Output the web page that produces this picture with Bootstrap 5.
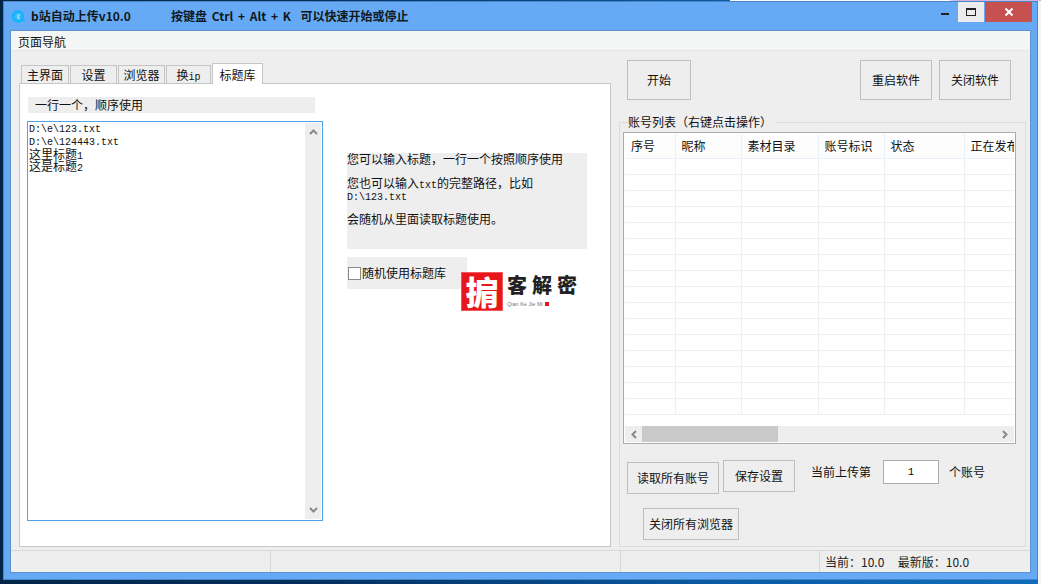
<!DOCTYPE html>
<html lang="zh">
<head>
<meta charset="utf-8">
<title>b站自动上传v10.0</title>
<link rel="stylesheet" href="https://cdn.jsdelivr.net/npm/bootstrap@5.3.0/dist/css/bootstrap.min.css">
<style>
html,body{margin:0;height:100%;overflow:hidden}
body{width:1041px;height:584px;position:relative;background:linear-gradient(90deg,#02264a 0,#032f5e 30%,#0a5ca6 70%,#0f6dbb 100%);font:12px/16px "Noto Sans CJK SC","Noto Sans CJK JP",sans-serif;color:#111;text-spacing-trim:space-all}
.behind{position:absolute;right:0;top:0;width:3px;height:100%;background:#f4f4f4}
.behindtop{position:absolute;left:730px;top:0;width:311px;height:1px;background:linear-gradient(90deg,#fff 0,#fff 70%,#cdb6e2 72%,#cdb6e2 100%)}
.win{position:absolute;left:3px;top:1px;width:1035px;height:579px;background:#66aaf5;border:1px solid #4a86c6;padding:0 6px 6px;display:flex;flex-direction:column}
.tbar{height:28px;display:flex;align-items:flex-start;flex:none;position:relative}
.appicon{margin:7px 0 0 1px;flex:none;display:block}
.t1{font:700 12px/16px "Noto Sans CJK SC",sans-serif;margin:6px 0 0 5px;color:#101820;width:140px}
.t2{font:700 12px/16px "Noto Sans CJK SC",sans-serif;color:#101820;margin-top:6px;word-spacing:2px}
.winbtns{margin-left:auto;display:flex;margin-right:-1px}
.wb{height:20px;display:flex;align-items:center;justify-content:center}
.wmin{width:26px}.wmin i{display:block;width:8px;height:2px;background:#222;margin-top:4px}
.wmax{width:26px;background:#ececec;margin-right:1px}.wmax i{display:block;width:10px;height:8px;border:1px solid #222;border-top-width:2px}
.wclose{width:47px;background:#c75050;color:#fff}
.client{flex:1;display:flex;flex-direction:column;background:#eee;border:1px solid #5b92cf;min-height:0}
.menubar{height:20px;background:#f4f6f5;border-bottom:1px solid #e6e6e6;padding:3px 7px 0;flex:none}
.bodyrow{flex:1;display:flex;min-height:0}
.leftcol{width:600px;flex:none;padding:12px 0 3px 8px;display:flex;flex-direction:column}
.tabs-x{border:0;gap:1px;flex-wrap:nowrap;padding-left:2px}
.tabs-x .nav-link{height:18px;margin:2px 0 0;padding:0;font-size:12px;line-height:17px;background:#eee;border:1px solid #c6c6c6;border-bottom:0;border-radius:0;color:#111;text-align:center}
.tabs-x .nav-link.active{height:21px;margin:0 0 -1px;padding-top:2px;background:#fff;border:1px solid #c6c6c6;border-bottom:0;position:relative;z-index:1;color:#111}
.mn{font-family:"Liberation Mono",monospace;font-size:10px}
.pane{flex:1;background:#fff;border:1px solid #c6c6c6;padding:13px 0 0 7px;display:flex;min-height:0}
.editcol{width:296px;flex:none}
.capt{margin-left:1px;width:287px;height:16px;background:#eee;padding-left:7px;line-height:16px}
.edit{margin-top:8px;height:400px;border:1px solid #4fa3e6;display:flex;padding-left:1px}
.edittext{flex:1;padding-top:1px;font:10px/13px "Liberation Mono","Noto Sans CJK SC",monospace;color:#111}
.edittext b{display:block;height:12px;font:400 12px/12px "Noto Sans CJK SC","Liberation Mono",sans-serif}
.edittext b:first-of-type{margin-top:-1px}
.vs{width:16px;margin:1px;background:#eee;display:flex;flex-direction:column;justify-content:space-between;align-items:center;padding:6px 0}
.infocol{margin-left:24px;width:240px;padding-top:56px;position:relative}
.info{width:240px;height:96px;background:#eee}
.info p{margin:0;line-height:12px;height:12px}
.info .gap1{margin-top:12px}
.info .gap2{margin-top:10px}
.info p.mono{font:10px/10px "Liberation Mono",monospace;height:10px;margin-top:4px}
.rnd{margin-top:8px;width:120px;height:32px;background:#eee;display:flex;align-items:center;gap:1px;padding:0 0 0 1px}
.rnd .form-check-input{width:13px;height:13px;margin:0;border-radius:0;border:1px solid #8a8a8a;flex:none}
.brand{position:absolute;left:114px;top:175px;display:flex;gap:4px}
.stamp{width:42px;height:39px;background:#e8161b;border:1px solid #f0585b;color:#fff;font:900 33px/37px "Noto Sans CJK SC",sans-serif;text-align:center}
.bname{font:900 20px/22px "Noto Sans CJK SC",sans-serif;color:#222;letter-spacing:5px;margin-top:2px;white-space:nowrap}
.bsub{font:5.500px/6px "Liberation Sans",sans-serif;color:#777;display:flex;align-items:center;gap:2px;margin-top:5px}
.bsub i{display:block;width:4px;height:4px;background:#e8161b}
.rightcol{flex:1;padding:9px 4px 3px 8px;display:flex;flex-direction:column;min-width:0}
.topbtns{display:flex;margin-left:8px;height:40px;flex:none}
.wbtn.btn{background:#eee;border:1px solid #bfbfbf;border-radius:0;color:#111;font-size:12px;line-height:16px;padding:0;--bs-btn-hover-bg:#eee}
.group{flex:1;border:1px solid #dcdcdc;margin-top:22px;position:relative;padding:9px 9px 0 3px;display:flex;flex-direction:column;min-height:0}
.grouplabel{position:absolute;left:8px;top:-9px;background:#eee;padding-right:4px;line-height:16px}
.lv{height:312px;border:1px solid #a9acb3;background:#fff;padding:1px;display:flex;flex-direction:column;flex:none;overflow:hidden}
.lv .table{table-layout:fixed;width:392px;margin:0;--bs-table-bg:transparent;border-collapse:collapse;font-size:12px}
.lv th{height:24px;padding:0 0 0 6px;vertical-align:middle;font-weight:400;line-height:18px;background:#fdfdfd;border:0;border-right:1px solid #e8f0fa;border-bottom:1px solid #e8f0fa;white-space:nowrap;overflow:hidden;color:#111}
.lv td{height:16px;padding:0;border:0;border-right:1px solid #efefef;border-bottom:1px solid #efefef}
.lv th:last-child,.lv td:last-child{border-right:0}
.lvbody{flex:1;overflow:hidden}
.hs{height:16px;background:#eee;display:flex;align-items:center;justify-content:space-between;position:relative;padding:0 6px;flex:none}
.thumb{position:absolute;left:17px;top:0;width:136px;height:100%;background:#c9c9c9}
.row1{display:flex;margin:16px 0 0 4px;align-items:flex-start;flex:none}
.upl{margin-left:16px;margin-top:4px}
.numb{width:56px;height:24px;margin:0 10px 0 12px;border:1px solid #abadb3;background:#fff;text-align:center;font:10px/22px "Liberation Mono",monospace;border-radius:0;padding:0}
.status{height:22px;flex:none;background:#eee;border-top:1px solid #d8d8d8;display:flex;align-items:stretch}
.sb1{width:260px;border-right:1px solid #d8d8d8}
.sb2{width:350px;border-right:1px solid #d8d8d8}
.sbgap{width:199px;border-right:1px solid #d8d8d8}
.sbtext{padding:3px 0 0 5px;white-space:pre;color:#222}
</style>
</head>
<body>
<div class="behind"></div>
<div class="behindtop"></div>
<div class="win">
  <div class="tbar">
    <svg class="appicon" width="15" height="15" viewBox="0 0 15 15"><circle cx="7" cy="7.500" r="5" fill="#39b6f5" stroke="#10b4ff" stroke-width="2.500"/><path d="M7 5v5M9 5 7 7.500 9 10" stroke="#a8e4ff" stroke-width="1" fill="none"/><path d="M11 11.500h3" stroke="#10b4ff" stroke-width="1.500"/></svg>
    <div class="t1">b站自动上传v10.0</div>
    <div class="t2">按键盘 Ctrl + Alt + K&nbsp; 可以快速开始或停止</div>
    <div class="winbtns">
      <div class="wb wmin"><i></i></div>
      <div class="wb wmax"><i></i></div>
      <div class="wb wclose"><svg width="10" height="10" viewBox="0 0 10 10"><path d="M1.500 1.500 8.500 8.500M8.500 1.500 1.500 8.500" stroke="#fff" stroke-width="2"/></svg></div>
    </div>
  </div>
  <div class="client">
    <div class="menubar">页面导航</div>
    <div class="bodyrow">
      <div class="leftcol">
        <ul class="nav nav-tabs tabs-x">
          <li class="nav-item"><a class="nav-link" style="width:48px">主界面</a></li>
          <li class="nav-item"><a class="nav-link" style="width:47px">设置</a></li>
          <li class="nav-item"><a class="nav-link" style="width:47px">浏览器</a></li>
          <li class="nav-item"><a class="nav-link" style="width:45px">换<span class="mn">ip</span></a></li>
          <li class="nav-item"><a class="nav-link active" style="width:51px">标题库</a></li>
        </ul>
        <div class="pane">
          <div class="editcol">
            <div class="capt">一行一个，顺序使用</div>
            <div class="edit">
              <div class="edittext">D:\e\123.txt<br>D:\e\124443.txt<b>这里标题<span class="mn">1</span></b><b>这是标题<span class="mn">2</span></b></div>
              <div class="vs">
                <svg width="9" height="6" viewBox="0 0 9 6"><path d="M1 5 4.500 1.500 8 5" fill="none" stroke="#888" stroke-width="2"/></svg>
                <svg width="9" height="6" viewBox="0 0 9 6"><path d="M1 1 4.500 4.500 8 1" fill="none" stroke="#888" stroke-width="2"/></svg>
              </div>
            </div>
          </div>
          <div class="infocol">
            <div class="info">
              <p>您可以输入标题，一行一个按照顺序使用</p>
              <p class="gap1">您也可以输入<span class="mn">txt</span>的完整路径，比如</p>
              <p class="mono">D:\123.txt</p>
              <p class="gap2">会随机从里面读取标题使用。</p>
            </div>
            <div class="rnd"><input class="form-check-input" type="checkbox" aria-label="随机使用标题库"><span>随机使用标题库</span></div>
            <div class="brand">
              <div class="stamp">掮</div>
              <div>
                <div class="bname">客解密</div>
                <div class="bsub">Qian Ke Jie Mi <i></i></div>
              </div>
            </div>
          </div>
        </div>
      </div>
      <div class="rightcol">
        <div class="topbtns">
          <button class="btn wbtn" style="width:64px">开始</button>
          <button class="btn wbtn ms-auto" style="width:72px">重启软件</button>
          <button class="btn wbtn" style="width:72px;margin:0 15px 0 7px">关闭软件</button>
        </div>
        <div class="group">
          <div class="grouplabel">账号列表（右键点击操作）</div>
          <div class="lv">
            <div class="lvbody">
              <table class="table">
                <colgroup><col style="width:50px"><col style="width:66px"><col style="width:77px"><col style="width:66px"><col style="width:80px"><col style="width:53px"></colgroup>
                <thead><tr><th>序号</th><th>昵称</th><th>素材目录</th><th>账号标识</th><th>状态</th><th>正在发布</th></tr></thead>
                <tbody>
                  <tr><td></td><td></td><td></td><td></td><td></td><td></td></tr>
                  <tr><td></td><td></td><td></td><td></td><td></td><td></td></tr>
                  <tr><td></td><td></td><td></td><td></td><td></td><td></td></tr>
                  <tr><td></td><td></td><td></td><td></td><td></td><td></td></tr>
                  <tr><td></td><td></td><td></td><td></td><td></td><td></td></tr>
                  <tr><td></td><td></td><td></td><td></td><td></td><td></td></tr>
                  <tr><td></td><td></td><td></td><td></td><td></td><td></td></tr>
                  <tr><td></td><td></td><td></td><td></td><td></td><td></td></tr>
                  <tr><td></td><td></td><td></td><td></td><td></td><td></td></tr>
                  <tr><td></td><td></td><td></td><td></td><td></td><td></td></tr>
                  <tr><td></td><td></td><td></td><td></td><td></td><td></td></tr>
                  <tr><td></td><td></td><td></td><td></td><td></td><td></td></tr>
                  <tr><td></td><td></td><td></td><td></td><td></td><td></td></tr>
                  <tr><td></td><td></td><td></td><td></td><td></td><td></td></tr>
                  <tr><td></td><td></td><td></td><td></td><td></td><td></td></tr>
                  <tr><td></td><td></td><td></td><td></td><td></td><td></td></tr>
                </tbody>
              </table>
            </div>
            <div class="hs">
              <div class="thumb"></div>
              <svg width="6" height="9" viewBox="0 0 6 9"><path d="M5 1 1.500 4.500 5 8" fill="none" stroke="#888" stroke-width="2"/></svg>
              <svg width="6" height="9" viewBox="0 0 6 9"><path d="M1 1 4.500 4.500 1 8" fill="none" stroke="#888" stroke-width="2"/></svg>
            </div>
          </div>
          <div class="row1">
            <button class="btn wbtn" style="width:92px;height:32px;margin-top:2px">读取所有账号</button>
            <button class="btn wbtn" style="width:72px;height:32px;margin-left:4px">保存设置</button>
            <span class="upl">当前上传第</span>
            <input class="numb" value="1" aria-label="当前上传第">
            <span class="upl" style="margin-left:0">个账号</span>
          </div>
          <button class="btn wbtn" style="width:96px;height:32px;margin:14px 0 0 20px">关闭所有浏览器</button>
        </div>
      </div>
    </div>
    <div class="status">
      <div class="sb1"></div>
      <div class="sb2"></div>
      <div class="sbgap"></div>
      <div class="sbtext">当前：10.0     最新版：10.0</div>
    </div>
  </div>
</div>
</body>
</html>
